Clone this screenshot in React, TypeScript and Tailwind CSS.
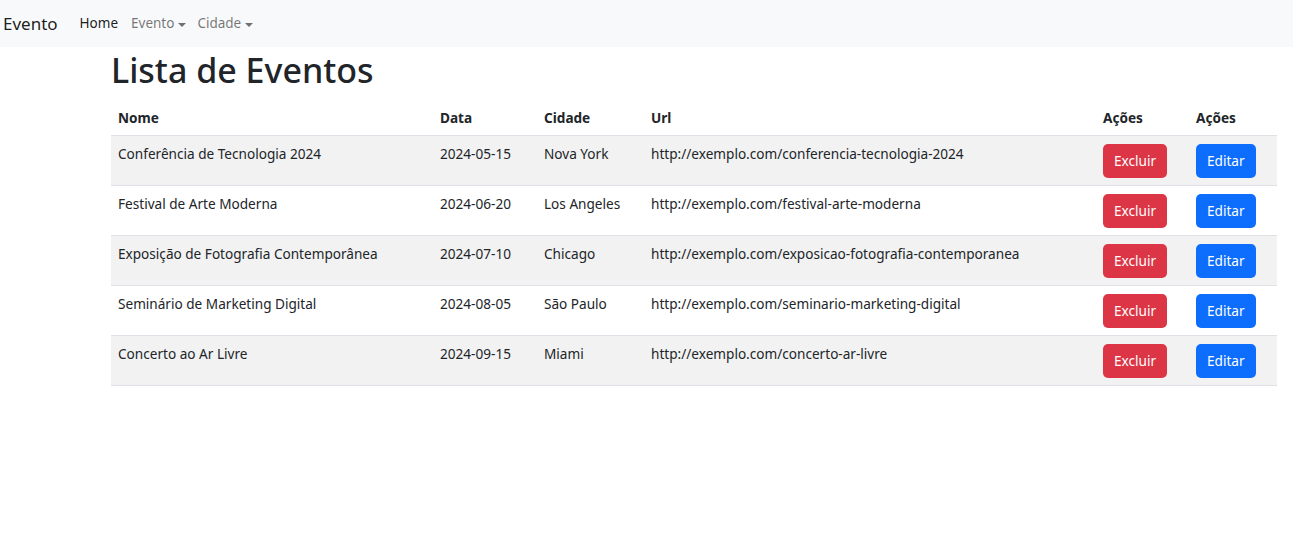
const eventos = [
  { nome: "Conferência de Tecnologia 2024", data: "2024-05-15", cidade: "Nova York", url: "http://exemplo.com/conferencia-tecnologia-2024" },
  { nome: "Festival de Arte Moderna", data: "2024-06-20", cidade: "Los Angeles", url: "http://exemplo.com/festival-arte-moderna" },
  { nome: "Exposição de Fotografia Contemporânea", data: "2024-07-10", cidade: "Chicago", url: "http://exemplo.com/exposicao-fotografia-contemporanea" },
  { nome: "Seminário de Marketing Digital", data: "2024-08-05", cidade: "São Paulo", url: "http://exemplo.com/seminario-marketing-digital" },
  { nome: "Concerto ao Ar Livre", data: "2024-09-15", cidade: "Miami", url: "http://exemplo.com/concerto-ar-livre" },
];

function Caret() {
  return <span className="ml-[4px] inline-block align-middle border-x-[4px] border-x-transparent border-t-[4px] border-t-current" />;
}

export default function App() {
  return (
    <div className="min-h-screen bg-white text-[#212529] font-['Noto_Sans',sans-serif] text-[13.6px]">
      <nav className="h-[47px] bg-[#f8f9fa] flex items-center px-[3px] text-[13.5px]">
        <span className="text-[17px] text-black/90 mr-[20px]">Evento</span>
        <a className="text-black/90 px-[2px] mr-[11px]">Home</a>
        <a className="text-black/55 mr-[11px]">Evento<Caret /></a>
        <a className="text-black/55">Cidade<Caret /></a>
      </nav>
      <div className="pl-[111px] pr-[16px]">
        <h1 className="text-[34px] font-medium leading-[1.2] mt-[3px] mb-[10px]">Lista de Eventos</h1>
        <table className="w-full border-collapse text-left">
          <thead>
            <tr className="h-[35px] border-b border-[#dee2e6]">
              <th className="w-[322px] px-[7px] font-bold">Nome</th>
              <th className="w-[104px] px-[7px] font-bold">Data</th>
              <th className="w-[107px] px-[7px] font-bold">Cidade</th>
              <th className="w-[452px] px-[7px] font-bold">Url</th>
              <th className="w-[93px] px-[7px] font-bold">Ações</th>
              <th className="px-[7px] font-bold">Ações</th>
            </tr>
          </thead>
          <tbody>
            {eventos.map((e, i) => (
              <tr key={i} className={`h-[50px] border-b border-[#dee2e6] ${i % 2 === 0 ? "bg-[#f2f2f2]" : "bg-white"}`}>
                <td className="px-[7px] pt-[8px] align-top">{e.nome}</td>
                <td className="px-[7px] pt-[8px] align-top">{e.data}</td>
                <td className="px-[7px] pt-[8px] align-top">{e.cidade}</td>
                <td className="px-[7px] pt-[8px] align-top">{e.url}</td>
                <td className="px-[7px] align-middle">
                  <button className="h-[34px] px-[11px] rounded-[5px] bg-[#dc3545] text-white">Excluir</button>
                </td>
                <td className="px-[7px] align-middle">
                  <button className="h-[34px] px-[11px] rounded-[5px] bg-[#0d6efd] text-white">Editar</button>
                </td>
              </tr>
            ))}
          </tbody>
        </table>
      </div>
    </div>
  );
}
